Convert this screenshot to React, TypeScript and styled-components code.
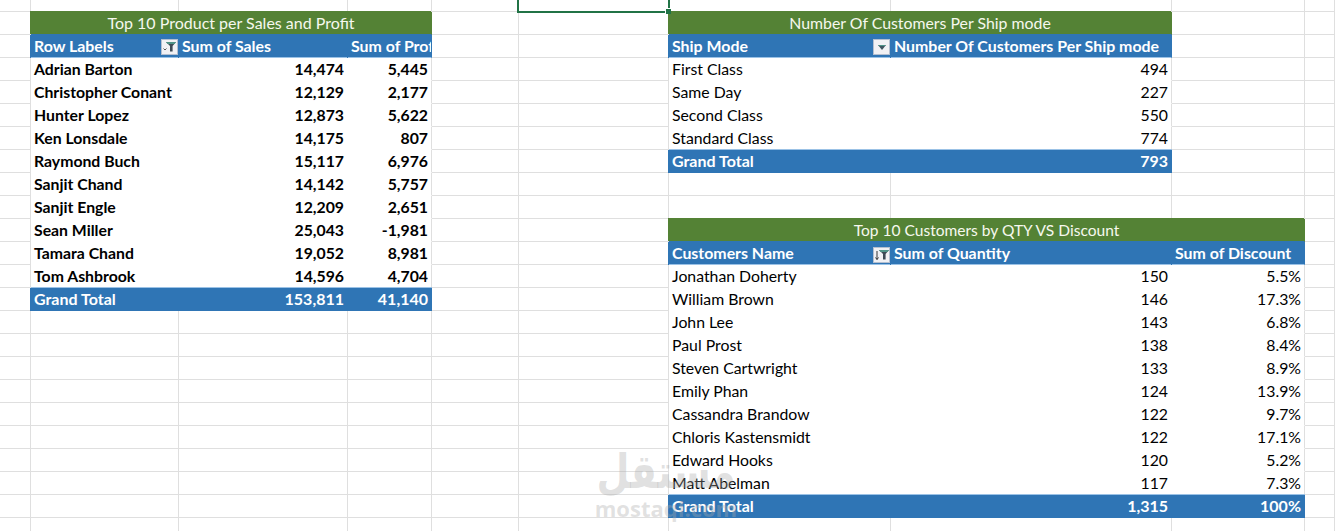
import React from "react";
import styled, { createGlobalStyle } from "styled-components";

const GlobalStyle = createGlobalStyle`
  html, body {
    margin: 0;
    padding: 0;
    height: 531px;
    overflow: hidden;
    background: #fff;
  }
`;

const Page = styled.div`
  position: relative;
  width: 1335px;
  height: 531px;
  overflow: hidden;
`;

const Sheet = styled.table`
  table-layout: fixed;
  border-collapse: separate;
  border-spacing: 0;
  width: 1335px;
  font-family: "Lato", "Liberation Sans", sans-serif;
  font-size: 15.8px;
  color: #000;
`;

const GRID = "#dfdfdf";
const GREEN = "#548235";
const BLUE = "#2f75b5";
const LIGHT = "#9bc2e6";

const Cell = styled.td<{ $kind?: string; $align?: string; $edge?: boolean; $size?: number }>`
  box-sizing: border-box;
  height: 23px;
  padding: 0 3px;
  line-height: 22px;
  white-space: nowrap;
  overflow: hidden;
  text-align: ${(p) => p.$align || "left"};
  border-right: 1px solid ${GRID};
  border-bottom: 1px solid ${GRID};
  ${(p) => p.$kind === "title" && `
    background: ${GREEN};
    color: #f6f8ee;
    font-size: ${p.$size ?? 16}px;
    text-align: center;
    border-right-color: ${GREEN};
    border-bottom-color: ${BLUE};
    box-shadow: -1px -1px 0 ${GREEN};
  `}
  ${(p) => p.$kind === "head" && `
    background: ${BLUE};
    color: #fff;
    font-size: 15.9px;
    font-weight: 700;
    border-right-color: ${BLUE};
    border-bottom-color: ${LIGHT};
    box-shadow: -1px 0 0 ${BLUE};
  `}
  ${(p) => p.$kind === "total" && `
    background: ${BLUE};
    color: #fff;
    font-size: 16px;
    font-weight: 700;
    border-color: ${BLUE};
    box-shadow: 0 -1px 0 ${LIGHT}, -1px 0 0 ${BLUE};
  `}
  ${(p) => p.$kind === "bold" && `
    font-weight: 700;
    border-bottom-color: #fff;
  `}
  ${(p) => p.$kind === "plain" && `
    border-bottom-color: #fff;
  `}
  ${(p) => (p.$kind === "bold" || p.$kind === "plain") && !p.$edge && `
    border-right-color: #fff;
  `}
`;

const TopRow = styled.tr`
  td {
    height: 12px;
    padding: 0;
    line-height: 0;
    font-size: 0;
  }
`;

const HeadInner = styled.div`
  position: relative;
`;

const FilterBox = styled.span<{ $top?: number }>`
  position: absolute;
  right: -3px;
  top: ${(p) => p.$top ?? 4}px;
  width: 17px;
  height: 16px;
  box-sizing: border-box;
  background: #f1f1f4;
  border: 1px solid #b4bfd0;
  display: flex;
  align-items: center;
  justify-content: center;
`;

const Selection = styled.div`
  position: absolute;
  left: 517px;
  top: -3px;
  width: 153px;
  height: 16px;
  box-sizing: border-box;
  border: 2px solid #217346;
`;

const Handle = styled.div`
  position: absolute;
  right: -3px;
  bottom: -3px;
  width: 5px;
  height: 5px;
  background: #217346;
  box-shadow: -1px -1px 0 #fff;
`;

const Watermark = styled.div`
  position: absolute;
  left: 590px;
  top: 446px;
  width: 152px;
  text-align: center;
  color: rgba(170, 170, 170, 0.36);
  font-family: "DejaVu Sans", sans-serif;
  font-weight: 700;
  pointer-events: none;
`;

const WatermarkLogo = styled.div`
  font-size: 38px;
  line-height: 52px;
  transform: scaleY(1.25);
`;

const WatermarkUrl = styled.div`
  font-family: "Open Sans", sans-serif;
  font-size: 22px;
  line-height: 20px;
  font-weight: 700;
`;

const COLS = [31, 148, 169, 84, 87, 150, 222, 281, 133, 30];

const IconFilter = () => (
  <svg width="14" height="12" viewBox="0 0 14 12">
    <path d="M3 1h10L9.6 5v5.5H7V5z" fill="#3d4a55" />
    <path d="M3 1h10l-1.5 2h-7z" fill="#4f9488" />
    <path d="M0.5 7.5 2 9l1.5-1.5" stroke="#555" strokeWidth="1" fill="none" />
  </svg>
);

const IconSortFilter = () => (
  <svg width="14" height="12" viewBox="0 0 14 12">
    <path d="M4 1h10l-3.4 4v5.5H8V5z" fill="#3d4a55" />
    <path d="M4 1h10l-1.5 2h-7z" fill="#4f9488" />
    <path d="M2 2v8.5M0.5 8.5 2 10.5l1.5-2" stroke="#333" strokeWidth="1" fill="none" />
  </svg>
);

const IconDrop = () => (
  <svg width="8" height="5" viewBox="0 0 8 5">
    <path d="M0 0h8L4 5z" fill="#3f5560" />
    <path d="M0 0h8L7 1H1z" fill="#4f9488" />
  </svg>
);

type Row = [string, string, string];

const sales: Row[] = [
  ["Adrian Barton", "14,474", "5,445"],
  ["Christopher Conant", "12,129", "2,177"],
  ["Hunter Lopez", "12,873", "5,622"],
  ["Ken Lonsdale", "14,175", "807"],
  ["Raymond Buch", "15,117", "6,976"],
  ["Sanjit Chand", "14,142", "5,757"],
  ["Sanjit Engle", "12,209", "2,651"],
  ["Sean Miller", "25,043", "-1,981"],
  ["Tamara Chand", "19,052", "8,981"],
  ["Tom Ashbrook", "14,596", "4,704"],
];

const shipModes: [string, string][] = [
  ["First Class", "494"],
  ["Same Day", "227"],
  ["Second Class", "550"],
  ["Standard Class", "774"],
];

const customers: Row[] = [
  ["Jonathan Doherty", "150", "5.5%"],
  ["William Brown", "146", "17.3%"],
  ["John Lee", "143", "6.8%"],
  ["Paul Prost", "138", "8.4%"],
  ["Steven Cartwright", "133", "8.9%"],
  ["Emily Phan", "124", "13.9%"],
  ["Cassandra Brandow", "122", "9.7%"],
  ["Chloris Kastensmidt", "122", "17.1%"],
  ["Edward Hooks", "120", "5.2%"],
  ["Matt Abelman", "117", "7.3%"],
];

const Empty = ({ n = 1 }: { n?: number }) => (
  <>
    {Array.from({ length: n }).map((_, i) => (
      <Cell key={i} />
    ))}
  </>
);

// left block: three columns after the gutter
const leftPart = (r: number) => {
  if (r === 0) return <Cell $kind="title" colSpan={3}>Top 10 Product per Sales and Profit</Cell>;
  if (r === 1)
    return (
      <>
        <Cell $kind="head">
          <HeadInner>
            Row Labels
            <FilterBox><IconFilter /></FilterBox>
          </HeadInner>
        </Cell>
        <Cell $kind="head">Sum of Sales</Cell>
        <Cell $kind="head">Sum of Profit</Cell>
      </>
    );
  if (r >= 2 && r < 12) {
    const row = sales[r - 2];
    return (
      <>
        <Cell $kind="bold">{row[0]}</Cell>
        <Cell $kind="bold" $align="right">{row[1]}</Cell>
        <Cell $kind="bold" $align="right" $edge>{row[2]}</Cell>
      </>
    );
  }
  if (r === 12)
    return (
      <>
        <Cell $kind="total">Grand Total</Cell>
        <Cell $kind="total" $align="right">153,811</Cell>
        <Cell $kind="total" $align="right">41,140</Cell>
      </>
    );
  return <Empty n={3} />;
};

// right block: ship mode table on two columns, customers table on three
const rightPart = (r: number) => {
  if (r === 0)
    return (
      <>
        <Cell $kind="title" colSpan={2} $size={15.85}>Number Of Customers Per Ship mode</Cell>
        <Cell />
      </>
    );
  if (r === 1)
    return (
      <>
        <Cell $kind="head">
          <HeadInner>
            Ship Mode
            <FilterBox><IconDrop /></FilterBox>
          </HeadInner>
        </Cell>
        <Cell $kind="head">Number Of Customers Per Ship mode</Cell>
        <Cell />
      </>
    );
  if (r >= 2 && r < 6) {
    const row = shipModes[r - 2];
    return (
      <>
        <Cell $kind="plain">{row[0]}</Cell>
        <Cell $kind="plain" $align="right" $edge>{row[1]}</Cell>
        <Cell />
      </>
    );
  }
  if (r === 6)
    return (
      <>
        <Cell $kind="total">Grand Total</Cell>
        <Cell $kind="total" $align="right">793</Cell>
        <Cell />
      </>
    );
  if (r === 9) return <Cell $kind="title" colSpan={3} $size={15.55}>Top 10 Customers by QTY VS Discount</Cell>;
  if (r === 10)
    return (
      <>
        <Cell $kind="head">
          <HeadInner>
            Customers Name
            <FilterBox $top={5}><IconSortFilter /></FilterBox>
          </HeadInner>
        </Cell>
        <Cell $kind="head">Sum of Quantity</Cell>
        <Cell $kind="head">Sum of Discount</Cell>
      </>
    );
  if (r >= 11 && r < 21) {
    const row = customers[r - 11];
    return (
      <>
        <Cell $kind="plain">{row[0]}</Cell>
        <Cell $kind="plain" $align="right">{row[1]}</Cell>
        <Cell $kind="plain" $align="right" $edge>{row[2]}</Cell>
      </>
    );
  }
  if (r === 21)
    return (
      <>
        <Cell $kind="total">Grand Total</Cell>
        <Cell $kind="total" $align="right">1,315</Cell>
        <Cell $kind="total" $align="right">100%</Cell>
      </>
    );
  return <Empty n={3} />;
};

export default function App() {
  return (
    <Page>
      <GlobalStyle />
      <Sheet>
        <colgroup>
          {COLS.map((w, i) => (
            <col key={i} width={w} />
          ))}
        </colgroup>
        <tbody>
          <TopRow>
            {COLS.map((_, i) => (
              <Cell key={i} />
            ))}
          </TopRow>
          {Array.from({ length: 23 }).map((_, r) => (
            <tr key={r}>
              <Cell />
              {leftPart(r)}
              <Empty n={2} />
              {rightPart(r)}
              <Cell />
            </tr>
          ))}
        </tbody>
      </Sheet>
      <Selection>
        <Handle />
      </Selection>
      <Watermark>
        <WatermarkLogo>مستقل</WatermarkLogo>
        <WatermarkUrl>mostaql.com</WatermarkUrl>
      </Watermark>
    </Page>
  );
}
